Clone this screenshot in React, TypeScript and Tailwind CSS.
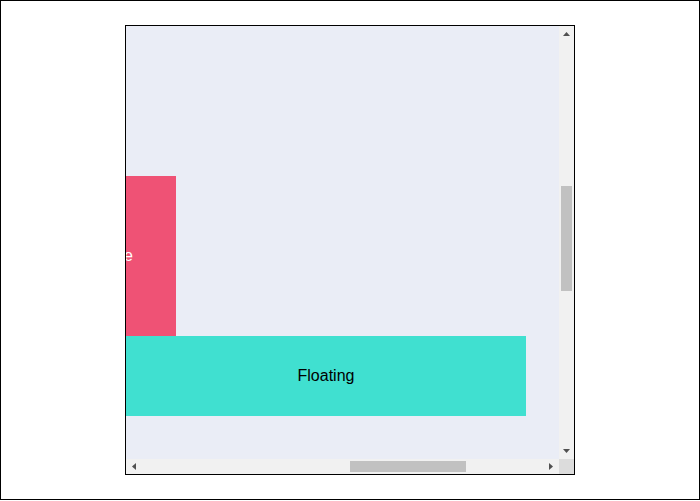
import React, { useLayoutEffect, useRef } from 'react';

function Arrow({ dir }: { dir: 'up' | 'down' | 'left' | 'right' }) {
  const points = {
    up: '0,4 3.5,0 7,4',
    down: '0,0 7,0 3.5,4',
    left: '4,0 4,7 0,3.5',
    right: '0,0 4,3.5 0,7',
  }[dir];
  const vertical = dir === 'up' || dir === 'down';
  return (
    <svg width={vertical ? 7 : 4} height={vertical ? 4 : 7} viewBox={vertical ? '0 0 7 4' : '0 0 4 7'}>
      <polygon points={points} fill="#505050" />
    </svg>
  );
}

export default function App() {
  const viewRef = useRef<HTMLDivElement>(null);

  useLayoutEffect(() => {
    if (viewRef.current) {
      viewRef.current.scrollLeft = 780;
      viewRef.current.scrollTop = 588;
    }
  }, []);

  return (
    <div className="w-[700px] h-[500px] border border-black bg-white flex items-center justify-center font-['Liberation_Sans',Arial,sans-serif]">
      <div className="w-[450px] h-[450px] border border-black grid grid-cols-[433px_15px] grid-rows-[433px_15px]">
        {/* scroll viewport */}
        <div ref={viewRef} className="overflow-hidden bg-[#eaedf6]">
          <div className="w-[1504px] h-[1646px] pt-[738px] flex flex-col">
            <div className="ml-[670px] w-[160px] h-[160px] bg-[#ef5275] text-white flex items-center justify-center text-base">
              Reference
            </div>
            <div className="ml-[780px] w-[400px] h-[80px] bg-[#40e0d0] text-black flex items-center justify-center text-base">
              Floating
            </div>
          </div>
        </div>

        {/* vertical scrollbar */}
        <div className="bg-[#f1f1f1] flex flex-col">
          <div className="h-[15px] flex items-center justify-center pt-px">
            <Arrow dir="up" />
          </div>
          <div className="flex-1 pt-[145px]">
            <div className="ml-[2px] w-[11px] h-[105px] bg-[#c1c1c1]" />
          </div>
          <div className="h-[15px] flex items-center justify-center pb-[2px]">
            <Arrow dir="down" />
          </div>
        </div>

        {/* horizontal scrollbar */}
        <div className="bg-[#f1f1f1] flex">
          <div className="w-[15px] flex items-center justify-center pl-px">
            <Arrow dir="left" />
          </div>
          <div className="flex-1 pl-[209px] pt-[2px]">
            <div className="w-[116px] h-[11px] bg-[#c1c1c1]" />
          </div>
          <div className="w-[15px] flex items-center justify-center pr-[2px]">
            <Arrow dir="right" />
          </div>
        </div>

        {/* corner */}
        <div className="bg-[#dcdcdc]" />
      </div>
    </div>
  );
}
